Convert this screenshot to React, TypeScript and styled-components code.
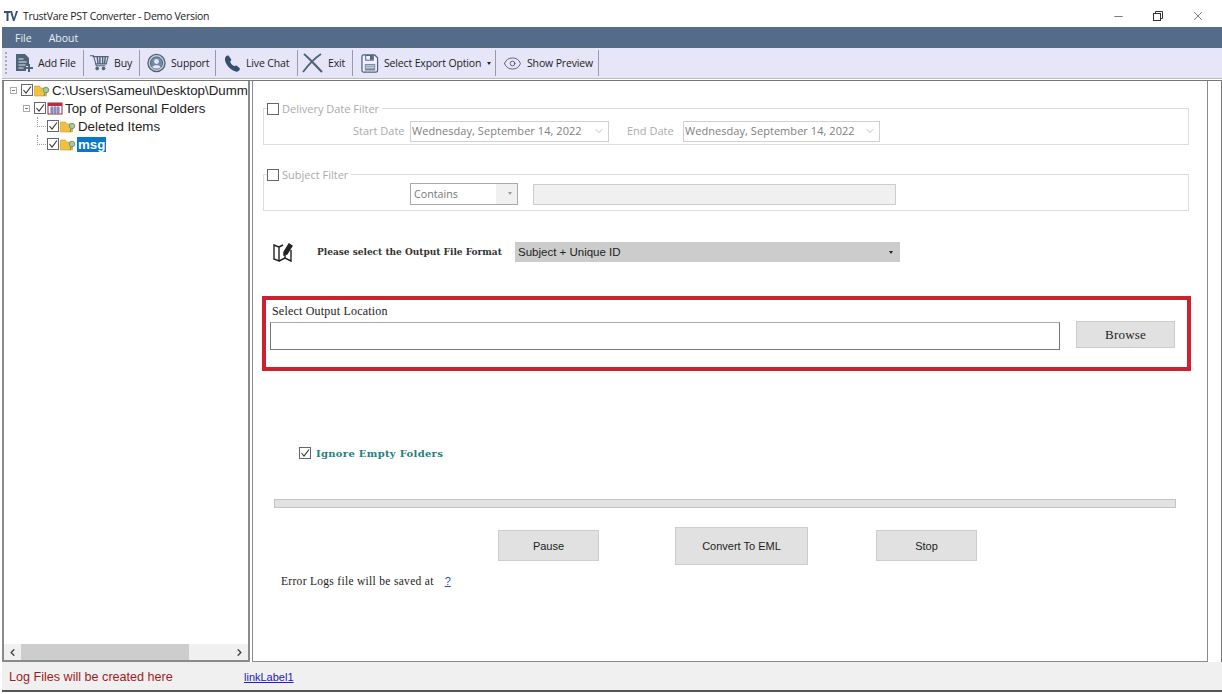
import styled, { createGlobalStyle } from 'styled-components';
import { ChevronDown, ChevronLeft, ChevronRight, Eye, X, Minus } from 'lucide-react';

const GlobalStyle = createGlobalStyle`
  html, body {
    margin: 0;
    padding: 0;
    background: #fff;
  }
`;

const Page = styled.div`
  width: 1222px;
  height: 694px;
  display: flex;
  flex-direction: column;
  padding-bottom: 2px;
  box-sizing: border-box;
  overflow: hidden;
  background: #fff;
  font-family: "Liberation Sans", sans-serif;
  svg {
    flex: none;
  }
`;

const TitleBar = styled.div`
  height: 27px;
  flex: none;
  display: flex;
  align-items: center;
  padding: 5px 0 0 4px;
  box-sizing: border-box;
  font: 10.5px "Open Sans", sans-serif;
  letter-spacing: -0.3px;
  color: #222;
`;

const TitleText = styled.span`
  margin-left: 5px;
`;

const WindowButtons = styled.div`
  margin-left: auto;
  display: flex;
  align-items: center;
  gap: 28px;
  padding-right: 17px;
  color: #333;
`;

const RestoreIcon = styled.svg`
  display: block;
`;

const MenuBar = styled.div`
  height: 21px;
  flex: none;
  margin-left: 2px;
  display: flex;
  align-items: center;
  gap: 17px;
  padding-left: 13px;
  background: #546c8a;
  color: #e8edf3;
  font: 10.5px "Open Sans", sans-serif;
`;

const Toolbar = styled.div`
  height: 31px;
  flex: none;
  margin-left: 2px;
  display: flex;
  align-items: stretch;
  padding-left: 3px;
  box-sizing: border-box;
  background: #e6e6f8;
  border-bottom: 1px solid #bbb;
  font: 10.5px "Open Sans", sans-serif;
  letter-spacing: -0.15px;
  color: #222;
`;

const Grip = styled.div`
  width: 3px;
  margin: 4px 4px 4px 0;
  border-left: 2px dotted #aaa;
`;

const ToolItem = styled.div<{ $w: number; $pl: number }>`
  width: ${(p) => p.$w}px;
  display: flex;
  align-items: center;
  gap: 5px;
  padding-left: ${(p) => p.$pl}px;
  margin: 2px 0;
  box-sizing: border-box;
  border-right: 1px solid #9a9aa8;
  white-space: nowrap;
`;

const Caret = styled.span`
  width: 0;
  height: 0;
  margin-left: 1px;
  border-left: 2.5px solid transparent;
  border-right: 2.5px solid transparent;
  border-top: 3px solid #222;
`;

const Main = styled.div`
  flex: 1;
  min-height: 0;
  display: flex;
  gap: 2px;
  margin: 1px 0 0 2px;
  border-top: 1px solid #777;
  border-right: 1px solid #777;
`;

const TreePanel = styled.div`
  width: 248px;
  flex: none;
  display: flex;
  flex-direction: column;
  box-sizing: border-box;
  border: 2px solid #8a8a8a;
  border-top: 0;
`;

const Tree = styled.div`
  flex: 1;
  overflow: hidden;
  font-size: 13.3px;
  color: #222;
`;

const TreeRow = styled.div<{ $indent: number }>`
  height: 18px;
  display: flex;
  align-items: center;
  gap: 1px;
  padding-left: ${(p) => p.$indent}px;
  white-space: nowrap;
`;

const Expander = styled.span`
  width: 7px;
  height: 7px;
  margin-right: 3px;
  flex: none;
  position: relative;
  box-sizing: border-box;
  border: 1px solid #aaa;
  &::after {
    content: "";
    position: absolute;
    left: 1px;
    top: 2px;
    width: 3px;
    height: 1px;
    background: #777;
  }
`;

const TreeLine = styled.span`
  width: 8px;
  height: 9px;
  flex: none;
  align-self: flex-start;
  border-left: 1px dotted #999;
  border-bottom: 1px dotted #999;
`;

const TreeText = styled.span<{ $selected?: boolean }>`
  padding: 0 1px;
  color: ${(p) => (p.$selected ? '#fff' : '#222')};
  background: ${(p) => (p.$selected ? '#0a78c4' : 'transparent')};
  font-weight: ${(p) => (p.$selected ? 700 : 400)};
`;

const ScrollBar = styled.div`
  height: 16px;
  flex: none;
  display: flex;
  align-items: center;
  background: #f0f0f0;
  color: #444;
`;

const ScrollThumb = styled.div`
  width: 168px;
  height: 100%;
  background: #cdcdcd;
`;

const ScrollEnd = styled.div`
  width: 17px;
  display: flex;
  justify-content: center;
`;

const ScrollGap = styled.div`
  flex: 1;
`;

const Content = styled.div`
  width: 956px;
  flex: none;
  box-sizing: border-box;
  border-left: 1px solid #8a8a8a;
  border-right: 1px solid #8a8a8a;
  border-bottom: 1px solid #8a8a8a;
  padding: 20px 0 0 10px;
`;

const FilterGroup = styled.fieldset`
  width: 926px;
  height: 44px;
  margin: 0 0 22px;
  padding: 0;
  box-sizing: border-box;
  border: 1px solid #ddd;
  color: #aaa;
`;

const FilterLegend = styled.legend`
  display: flex;
  align-items: center;
  gap: 3px;
  margin-left: 3px;
  padding: 0 3px 0 0;
  font: 11px "Open Sans", sans-serif;
  color: #aaa;
`;

const Check = styled.span`
  width: 12px;
  height: 12px;
  flex: none;
  display: block;
  box-sizing: border-box;
  border: 1px solid #666;
  background: #fff;
`;

const CheckSvg = styled.svg`
  display: block;
`;

const FilterRow = styled.div<{ $pl: number; $mt: number }>`
  display: flex;
  align-items: center;
  padding-left: ${(p) => p.$pl}px;
  margin-top: ${(p) => p.$mt}px;
  font: 11px "Open Sans", sans-serif;
`;

const DateLabel = styled.span<{ $w: number }>`
  width: ${(p) => p.$w}px;
  flex: none;
  padding-bottom: 3px;
  white-space: nowrap;
`;

const DateField = styled.div<{ $w: number; $mr?: number }>`
  width: ${(p) => p.$w}px;
  height: 21px;
  margin-right: ${(p) => p.$mr ?? 0}px;
  display: flex;
  align-items: center;
  justify-content: space-between;
  padding: 0 3px 2px 1px;
  box-sizing: border-box;
  border: 1px solid #d0d0d0;
  color: #808080;
  font: 11px "Open Sans", sans-serif;
  letter-spacing: 0.05px;
  white-space: nowrap;
`;

const ComboBox = styled.div`
  width: 108px;
  height: 22px;
  margin-right: 15px;
  display: flex;
  align-items: center;
  padding: 0 0 1px 3px;
  box-sizing: border-box;
  border: 1px solid #aaa;
  color: #777;
  background: linear-gradient(to right, #fff 85px, #f0f0f0 85px);
  font: 10.7px "Open Sans", sans-serif;
`;

const ComboCaret = styled.span`
  width: 0;
  height: 0;
  margin-left: auto;
  margin-right: 5px;
  border-left: 2px solid transparent;
  border-right: 2px solid transparent;
  border-top: 3px solid #999;
`;

const DisabledInput = styled.div`
  width: 363px;
  height: 21px;
  box-sizing: border-box;
  border: 1px solid #ccc;
  background: #f0f0f0;
`;

const FormatRow = styled.div`
  display: flex;
  align-items: center;
  height: 22px;
  margin: 30px 0 0 9px;
`;

const MapIcon = styled.svg`
  margin-right: 23px;
`;

const SerifLabel = styled.span`
  width: 185px;
  flex: none;
  font: 700 9px "DejaVu Serif", serif;
  color: #333;
  white-space: nowrap;
`;

const FormatSelect = styled.div`
  width: 385px;
  height: 20px;
  margin-left: 13px;
  display: flex;
  align-items: center;
  padding: 0 7px 0 3px;
  box-sizing: border-box;
  background: #cccccc;
  font-size: 11.5px;
  color: #222;
`;

const FormatCaret = styled(Caret)`
  margin-left: auto;
`;

const OutputBox = styled.div`
  width: 929px;
  height: 75px;
  margin: 33px 0 0 -1px;
  padding: 6px 12px 0 4px;
  box-sizing: border-box;
  border: 4px solid #cd2131;
`;

const OutputLabel = styled.div`
  margin: 0 0 5px 2px;
  font: 12px "Liberation Serif", serif;
  letter-spacing: 0.2px;
  color: #222;
  height: 11px;
  line-height: 11px;
`;

const OutputRow = styled.div`
  display: flex;
  align-items: flex-start;
  justify-content: space-between;
`;

const PathInput = styled.div`
  width: 790px;
  height: 28px;
  box-sizing: border-box;
  border: 1px solid #777;
  border-top-color: #aaa;
`;

const GrayButton = styled.div<{ $w: number; $h: number; $mt?: number; $serif?: boolean }>`
  width: ${(p) => p.$w}px;
  height: ${(p) => p.$h}px;
  margin-top: ${(p) => p.$mt ?? 0}px;
  flex: none;
  display: flex;
  align-items: center;
  justify-content: center;
  box-sizing: border-box;
  border: 1px solid #ccc;
  background: #e1e1e1;
  color: #222;
  font: ${(p) => (p.$serif ? '13px "Liberation Serif", serif' : '11px "Liberation Sans", sans-serif')};
`;

const BrowseButton = styled(GrayButton)`
  margin-top: -1px;
  letter-spacing: 0.2px;
`;

const IgnoreRow = styled.div`
  display: flex;
  align-items: center;
  gap: 5px;
  margin: 75px 0 0 36px;
  height: 14px;
`;

const IgnoreLabel = styled.span`
  font: 700 10px "DejaVu Serif", serif;
  letter-spacing: 0.3px;
  color: #1f8080;
`;

const ProgressBar = styled.div`
  width: 902px;
  height: 9px;
  margin: 39px 0 0 11px;
  box-sizing: border-box;
  border: 1px solid #c4c4c4;
  background: #e2e2e2;
`;

const ActionRow = styled.div`
  display: flex;
  align-items: flex-start;
  margin: 19px 0 0 235px;
`;

const ErrorRow = styled.div`
  display: flex;
  align-items: center;
  margin: 9px 0 0 18px;
  height: 14px;
`;

const ErrorText = styled.span`
  font: 11.5px "Liberation Serif", serif;
  color: #222;
  letter-spacing: 0.3px;
`;

const HelpLink = styled.span`
  margin-left: 11px;
  font: 11px "Liberation Sans", sans-serif;
  color: #2a4da0;
  text-decoration: underline;
`;

const ActionGap = styled.div<{ $w: number }>`
  width: ${(p) => p.$w}px;
`;

const StatusBar = styled.div`
  height: 27px;
  flex: none;
  display: flex;
  align-items: center;
  margin-left: 2px;
  padding: 1px 0 0 7px;
  background: #f0f0f0;
  border-bottom: 2px solid #555;
  font-size: 12.6px;
`;

const LogText = styled.span`
  width: 235px;
  color: #a01c24;
`;

const LogLink = styled.span`
  font-size: 11px;
  color: #2020c0;
  text-decoration: underline;
`;

const Checkbox = ({ checked }: { checked?: boolean }) => (
  <Check>
    {checked && (
      <CheckSvg width="10" height="10" viewBox="0 0 10 10">
        <path d="M1.5 5 L4 8 L9 1.5" fill="none" stroke="#333" strokeWidth="1.1" />
      </CheckSvg>
    )}
  </Check>
);

const FolderIcon = () => (
  <svg width="16" height="14" viewBox="0 0 16 14">
    <path d="M0.500 3h5l1 2h6v8h-12z" fill="#f0c040" stroke="#c89a20" strokeWidth="0.6" />
    <circle cx="12" cy="7" r="2.800" fill="#a8c8a0" stroke="#5c8c6c" strokeWidth="0.8" />
    <path d="M11 10l-1 3" stroke="#5c8c6c" />
  </svg>
);

const CalendarIcon = () => (
  <svg width="16" height="14" viewBox="0 0 16 14">
    <rect x="1" y="2" width="14" height="11" fill="#fff" stroke="#8c2c3c" />
    <rect x="1" y="2" width="14" height="3" fill="#b83040" />
    <path d="M3 7h10M3 9h10M3 11h10M5 5v8M8 5v8M11 5v8" stroke="#4c4c8c" strokeWidth="0.8" />
  </svg>
);

const AddFileIcon = () => (
  <svg width="18" height="20" viewBox="0 0 18 20">
    <path d="M1 1h9l4 4v8h-3v5H1z" fill="#4f6478" />
    <path d="M3.500 6h5M3.500 9h8M3.500 12h7M3.500 15h5" stroke="#e6e6f8" strokeWidth="1.2" />
    <path d="M14 11v8M10 15h8" stroke="#4f6478" strokeWidth="2" />
  </svg>
);

const CartIcon = () => (
  <svg width="20" height="20" viewBox="0 0 22 20" fill="none" stroke="#4f6478">
    <path d="M1 2h4l3 11h10" strokeWidth="1.2" />
    <path d="M4 3h17l-2 8H7" strokeWidth="1.2" />
    <path d="M9 3l1 8M12 3v8M15 3v8M18 3l-1 8" strokeWidth="1.6" />
    <circle cx="9" cy="16" r="1.6" fill="#4f6478" />
    <circle cx="16" cy="16" r="1.6" fill="#4f6478" />
  </svg>
);

const SupportIcon = () => (
  <svg width="19" height="20" viewBox="0 0 20 20">
    <circle cx="10" cy="10" r="9" fill="#c8ccd8" stroke="#4f6478" strokeWidth="1.4" />
    <circle cx="10" cy="10" r="6.4" fill="#6f8aa8" stroke="#4f6478" />
    <circle cx="10" cy="8.4" r="2.6" fill="#e6e6f8" />
    <path d="M5.6 14.4c1-2.6 7.800-2.6 8.800 0c-2 1.800-6.800 1.800-8.800 0z" fill="#e6e6f8" />
  </svg>
);

const PhoneIcon = () => (
  <svg width="17" height="19" viewBox="0 0 18 19">
    <path d="M2 2c1-1 2.500-1.200 3.200-.4L7.500 5c.4.800 0 1.600-1 2.400c.6 2 2.200 4 4.400 5c1-.8 1.800-1 2.600-.5l3 2.300c.6.800.3 2-.8 3c-1.500 1.300-3.500 1.300-6-.2C5.500 14.500 2.500 11 1.300 7C.8 5 1 3.200 2 2z" fill="#35506c" />
  </svg>
);

const ExitIcon = () => (
  <svg width="21" height="20" viewBox="0 0 21 20" fill="none" stroke="#4f6478">
    <path d="M2 1c5 4 11 11 18 18" strokeWidth="2.200" />
    <path d="M19 1C13 5 7 11 1 19" strokeWidth="1.800" />
  </svg>
);

const SaveIcon = () => (
  <svg width="18" height="21" viewBox="0 0 19 21" fill="none" stroke="#4f6478">
    <path d="M2.500 1.500h12l3 3v13a2 2 0 0 1-2 2h-13a1.500 1.500 0 0 1-1.500-1.500V3a1.500 1.500 0 0 1 1.500-1.500z" strokeWidth="1.3" fill="#eef" />
    <rect x="5" y="2" width="8" height="5" stroke="#4f6478" />
    <rect x="10" y="3" width="2" height="3" fill="#4f6478" />
    <rect x="4" y="11" width="11" height="7" fill="#7d8ea0" stroke="none" />
    <path d="M5 13h9M5 15h9" stroke="#dfe3ea" />
  </svg>
);

const FormatMapIcon = () => (
  <MapIcon width="22" height="22" viewBox="0 0 22 22" fill="none" stroke="#222" strokeWidth="1.400">
    <path d="M2 4l5 2v14l-5-2z" />
    <path d="M7 6l4-2M7 20l6-3l6 3V9" />
    <path d="M13 13v4" />
    <path d="M12 11l5-8l3 2l-5 8l-3 1z" fill="#222" />
  </MapIcon>
);

function App() {
  return (
    <Page>
      <GlobalStyle />

      <TitleBar>
        <svg width="14" height="12" viewBox="0 0 14 12">
          <path d="M0 1h7l-1 2H4.500v8H2.500V3H0z" fill="#34506e" />
          <path d="M6 1h2l2 7l2-7h2l-3.500 10h-1.500z" fill="#34506e" />
        </svg>
        <TitleText>TrustVare PST Converter - Demo Version</TitleText>
        <WindowButtons>
          <Minus size={13} strokeWidth={1.2} />
          <RestoreIcon width="10" height="10" viewBox="0 0 10 10" fill="none" stroke="#333">
            <rect x="0.5" y="2.500" width="7" height="7" />
            <path d="M2.500 2.500V0.500h7v7h-2" />
          </RestoreIcon>
          <X size={14} strokeWidth={1.1} />
        </WindowButtons>
      </TitleBar>

      <MenuBar>
        <span>File</span>
        <span>About</span>
      </MenuBar>

      <Toolbar>
        <Grip />
        <ToolItem $w={70} $pl={1}><AddFileIcon />Add File</ToolItem>
        <ToolItem $w={56} $pl={5}><CartIcon />Buy</ToolItem>
        <ToolItem $w={76} $pl={7}><SupportIcon />Support</ToolItem>
        <ToolItem $w={82} $pl={8}><PhoneIcon />Live Chat</ToolItem>
        <ToolItem $w={55} $pl={4}><ExitIcon />Exit</ToolItem>
        <ToolItem $w={143} $pl={8}><SaveIcon />Select Export Option <Caret /></ToolItem>
        <ToolItem $w={103} $pl={7}><Eye size={19} strokeWidth={1} color="#445" />Show Preview</ToolItem>
      </Toolbar>

      <Main>
        <TreePanel>
          <Tree>
            <TreeRow $indent={6}><Expander /><Checkbox checked /><FolderIcon /><TreeText>C:\Users\Sameul\Desktop\Dumm</TreeText></TreeRow>
            <TreeRow $indent={19}><Expander /><Checkbox checked /><CalendarIcon /><TreeText>Top of Personal Folders</TreeText></TreeRow>
            <TreeRow $indent={33}><TreeLine /><Checkbox checked /><FolderIcon /><TreeText>Deleted Items</TreeText></TreeRow>
            <TreeRow $indent={33}><TreeLine /><Checkbox checked /><FolderIcon /><TreeText $selected>msg</TreeText></TreeRow>
          </Tree>
          <ScrollBar>
            <ScrollEnd><ChevronLeft size={11} strokeWidth={3} /></ScrollEnd>
            <ScrollThumb />
            <ScrollGap />
            <ScrollEnd><ChevronRight size={11} strokeWidth={3} /></ScrollEnd>
          </ScrollBar>
        </TreePanel>

        <Content>
          <FilterGroup>
            <FilterLegend><Checkbox />Delivery Date Filter</FilterLegend>
            <FilterRow $pl={89} $mt={5}>
              <DateLabel $w={57}>Start Date</DateLabel>
              <DateField $w={199} $mr={18}>Wednesday, September 14, 2022<ChevronDown size={12} strokeWidth={1} /></DateField>
              <DateLabel $w={56}>End Date</DateLabel>
              <DateField $w={197}>Wednesday, September 14, 2022<ChevronDown size={12} strokeWidth={1} /></DateField>
            </FilterRow>
          </FilterGroup>

          <FilterGroup>
            <FilterLegend><Checkbox />Subject Filter</FilterLegend>
            <FilterRow $pl={146} $mt={1}>
              <ComboBox>Contains<ComboCaret /></ComboBox>
              <DisabledInput />
            </FilterRow>
          </FilterGroup>

          <FormatRow>
            <FormatMapIcon />
            <SerifLabel>Please select the Output File Format</SerifLabel>
            <FormatSelect>Subject + Unique ID<FormatCaret /></FormatSelect>
          </FormatRow>

          <OutputBox>
            <OutputLabel>Select Output Location</OutputLabel>
            <OutputRow>
              <PathInput />
              <BrowseButton $w={99} $h={27} $serif>Browse</BrowseButton>
            </OutputRow>
          </OutputBox>

          <IgnoreRow>
            <Checkbox checked />
            <IgnoreLabel>Ignore Empty Folders</IgnoreLabel>
          </IgnoreRow>

          <ProgressBar />

          <ActionRow>
            <GrayButton $w={101} $h={31} $mt={3}>Pause</GrayButton>
            <ActionGap $w={76} />
            <GrayButton $w={133} $h={38}>Convert To EML</GrayButton>
            <ActionGap $w={68} />
            <GrayButton $w={101} $h={31} $mt={3}>Stop</GrayButton>
          </ActionRow>

          <ErrorRow>
            <ErrorText>Error Logs file will be saved at</ErrorText>
            <HelpLink>?</HelpLink>
          </ErrorRow>
        </Content>
      </Main>

      <StatusBar>
        <LogText>Log Files will be created here</LogText>
        <LogLink>linkLabel1</LogLink>
      </StatusBar>
    </Page>
  );
}

export default App;
